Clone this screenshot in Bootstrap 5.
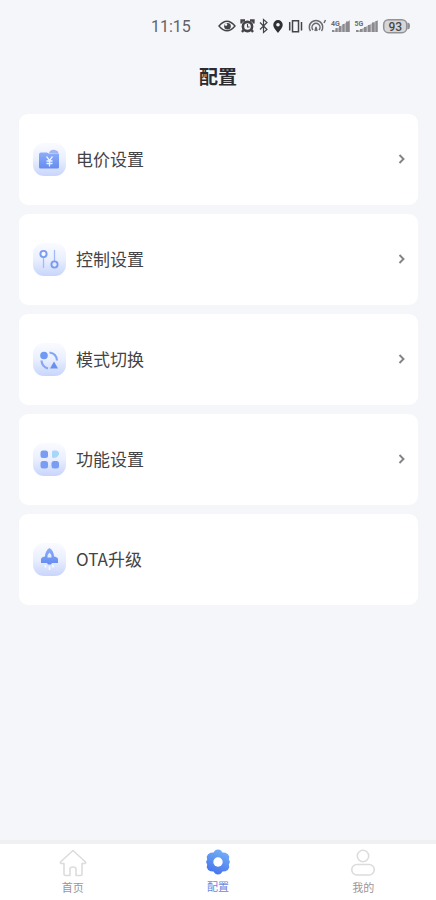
<!DOCTYPE html>
<html lang="zh-CN">
<head>
<meta charset="utf-8">
<meta name="viewport" content="width=device-width, initial-scale=1">
<title>配置</title>
<link href="https://cdn.jsdelivr.net/npm/bootstrap@5.3.0/dist/css/bootstrap.min.css" rel="stylesheet">
<style>
body{background:#f5f6fa;font-family:"Noto Sans","Noto Sans CJK SC",sans-serif;color:#3c3c3e;height:900px;overflow:hidden}
svg{display:block;flex:none}
.status{height:52px;padding-left:151px}
.clock{width:67px;font:16px/20px Roboto,sans-serif;color:#626266;padding-top:1px}
.title{height:47px;font:700 19px/47px "Noto Sans CJK SC",sans-serif;color:#2c2c30}
.menu{gap:9px;padding:15px 18px 0 19px}
.item{height:91px;border-radius:9px;padding:0 10px 1px 14px;font:17px/24px "Noto Sans CJK SC",sans-serif;color:#444446;text-decoration:none}
.tile{width:33px;height:33px;border-radius:11px;background:linear-gradient(#f9faff 5%,#e9effe 50%,#c8d5fc);margin-right:10px}
.tabs{height:60px;border-top:4px solid #eef0f1}
.tab{width:145.3px;padding-top:5px;font:11px/16px "Noto Sans CJK SC",sans-serif;color:#97979a;text-decoration:none}
.tab span{padding-top:2px}
.tab.current{color:#6c86e0;padding-top:4px}
</style>
</head>
<body class="d-flex flex-column">
<header>
<div class="status d-flex align-items-center">
<span class="clock">11:15</span>
<svg width="192" height="20" viewBox="218 16 192 20" fill="none" stroke="#444448" stroke-width="1.4">
<path d="M219 26q8-9.500 16 0q-8 9.500-16 0z"/><circle cx="227.500" cy="26.300" r="3.300" fill="#444448" stroke="none"/><circle cx="226" cy="24.500" r="1.300" fill="#f5f6fb" stroke="none"/>
<circle cx="247.500" cy="26.500" r="4.600" stroke-width="2.600"/><path d="M241.500 23.500v-3h3.500M250 20.500h3.500v3M243.500 30l-1.500 2M251.500 30l1.500 2" stroke-width="2.300"/><path d="M247.500 24v3h2" stroke-width="1.100"/>
<path d="M260 22.500l7 7-3.500 3v-13l3.500 3-7 7" stroke-width="1.200"/>
<path d="M278 33c-2-3-4.700-5-4.700-8.300a4.700 4.700 0 0 1 9.400 0c0 3.300-2.700 5.300-4.700 8.300z" fill="#303034" stroke="none"/><circle cx="278" cy="24.800" r="1.800" fill="#f5f6fb" stroke="none"/>
<path d="M292.500 20.700h6v11h-6zM289.700 22v8.500M301.500 22v8.500" stroke-width="1.500"/>
<g stroke="#6a6a6e" stroke-width="1.500"><path d="M310.500 31a6.700 6.700 0 1 1 11 0M313 30a4 4 0 1 1 6 0M315 31l1-4 1 4M324 23l1.500-3"/></g>
<g fill="#8b8b8f" stroke="none"><path d="M332 32v-2h2v2zM335.500 32v-4h2v4zM339 32v-6h2v6zM342.500 32v-8h2v8zM346 32v-10.500h3.500V32z"/><path d="M332 32l18-12v12z" opacity=".6"/><path d="M356 32v-2h2.500v2zM360 32v-3h2.500v3zM364 32v-5h2.500v5zM368 32v-7h2.500v7zM372 32v-9.500h2.500V32zM375.500 32V21h2v11z"/><path d="M356 32l22-12v12z" opacity=".55"/></g>
<g fill="#6c6c70" stroke="none" font-family="Roboto,sans-serif" font-weight="700" font-size="7"><text x="331" y="25.500">4G</text><text x="354.500" y="25.500">5G</text></g>
<rect x="383.700" y="19.700" width="23" height="13" rx="4.800" fill="#d7d7da" stroke="#929296" stroke-width="1.500"/><path d="M408 23.500c1.700 0 1.700 5 0 5z" fill="#929296" stroke="#929296"/>
<text x="395.200" y="30.500" text-anchor="middle" fill="#47474b" stroke="none" font-family="Roboto,sans-serif" font-weight="500" font-size="12">93</text>
</svg>
</div>
<h1 class="title text-center m-0">配置</h1>
</header>

<svg width="0" height="0" class="position-absolute"><defs><linearGradient id="blue" x1="0" y1="0" x2="0" y2="1"><stop stop-color="#8caefa"/><stop offset="1" stop-color="#648bf0"/></linearGradient><linearGradient id="gear" x1="0.700" y1="0" x2="0.300" y2="1"><stop stop-color="#75b0f5"/><stop offset="1" stop-color="#4472ee"/></linearGradient></defs></svg>

<main class="menu d-flex flex-column flex-grow-1">
<a class="item bg-white d-flex align-items-center" href="#">
<span class="tile"><svg width="33" height="33"><path d="M16 10l1-2q4-2.500 8 .5l.5 2z" fill="#a3b5ef"/><path d="M6 11.500q0-2 2-2h6l1.500 1H25q1 0 1 1V24q0 1.500-1.500 1.500h-17Q6 25.500 6 24z" fill="url(#blue)"/><path d="M13.500 13.500l3 4 3-4M16.500 17.500v6M13.500 18h6M13.500 20.500h6" fill="none" stroke="#e9f3ff" stroke-width="1.300"/></svg></span>
<span class="flex-grow-1">电价设置</span>
<svg width="12" height="12" fill="none" stroke="#838387" stroke-width="1.900"><path d="M3.500 2l4 4-4 4"/></svg></a>
<a class="item bg-white d-flex align-items-center" href="#">
<span class="tile"><svg width="33" height="33" fill="none"><path d="M10.500 13v12M21.500 7v12" stroke="#a2bafa" stroke-width="1.300"/><circle cx="10.500" cy="11" r="3.100" fill="#f5f8ff" stroke="#799bf1" stroke-width="1.900"/><circle cx="21.500" cy="21.500" r="3.100" fill="#e3ebff" stroke="#799bf1" stroke-width="1.900"/></svg></span>
<span class="flex-grow-1">控制设置</span>
<svg width="12" height="12" fill="none" stroke="#838387" stroke-width="1.900"><path d="M3.500 2l4 4-4 4"/></svg></a>
<a class="item bg-white d-flex align-items-center" href="#">
<span class="tile"><svg width="33" height="33"><circle cx="11" cy="12.500" r="3.800" fill="#709af2"/><path d="M21 18.500l4 7h-8z" fill="#6890ef"/><path d="M16.500 9.500q7 1 7.500 8M8.500 17.500q.5 6.500 6.500 8" fill="none" stroke="#84a7f5" stroke-width="2.200"/></svg></span>
<span class="flex-grow-1">模式切换</span>
<svg width="12" height="12" fill="none" stroke="#838387" stroke-width="1.900"><path d="M3.500 2l4 4-4 4"/></svg></a>
<a class="item bg-white d-flex align-items-center" href="#">
<span class="tile"><svg width="33" height="33" fill="#7a9df4"><rect x="7.500" y="7.500" width="7.500" height="7.500" rx="2.500"/><path d="M19 9q0-1.500 1.500-1.500h3q3 1 2.500 4-2 3.500-5.500 3.500-1.500 0-1.500-1.500z" fill="#a8d5fa"/><rect x="7.500" y="18" width="7.500" height="7.500" rx="2.500"/><rect x="18.500" y="18" width="7.500" height="7.500" rx="2.500"/></svg></span>
<span class="flex-grow-1">功能设置</span>
<svg width="12" height="12" fill="none" stroke="#838387" stroke-width="1.900"><path d="M3.500 2l4 4-4 4"/></svg></a>
<a class="item bg-white d-flex align-items-center" href="#">
<span class="tile"><svg width="33" height="33"><path d="M16.500 5q4 2 4.500 8.500 3.500.5 4 2.500v4h-6l-1 1.500h-3L14 20H8v-4q.5-2 4-2.500Q12.500 7 16.500 5z" fill="url(#blue)"/><path d="M16.500 9.500q2 1.500 2 5h-4q0-3.500 2-5z" fill="#e4edff"/><path d="M12.500 22v2.500M16.500 23.500v3.500M20 22v2.500" stroke="#f7faff" stroke-width="1.500"/></svg></span>
<span class="flex-grow-1">OTA升级</span></a>
</main>

<nav class="tabs d-flex bg-white">
<a class="tab d-flex flex-column align-items-center" href="#"><svg width="28" height="28" fill="none" stroke="#dcdcdf" stroke-width="1.600" stroke-linejoin="round"><path d="M14 1.500L1.500 13q-.5 1.500 1 1.500H5V25q0 1.500 1.500 1.500H11V20q0-2 3-2t3 2v6.500h4.500q1.500 0 1.500-1.500V14.500h2.500q1.500 0 1-1.500z"/></svg><span>首页</span></a>
<a class="tab current d-flex flex-column align-items-center" href="#"><svg width="28" height="28"><path d="M11 2.500q3-2 6 0l1.500 2 3 .2q3 .8 3.800 4L24.800 11.500l1.200 2.500-1.200 2.500.5 2.800q-.8 3.200-3.800 4l-3 .2-1.500 2q-3 2-6 0l-1.500-2-3-.2q-3-.8-3.800-4l.5-2.800L2 14l1.200-2.500-.5-2.800q.8-3.200 3.800-4l3-.2z" fill="url(#gear)"/><circle cx="14" cy="14" r="4.700" fill="#fff"/></svg><span>配置</span></a>
<a class="tab d-flex flex-column align-items-center" href="#"><svg width="28" height="28" fill="none" stroke="#dcdcdf" stroke-width="1.600"><circle cx="14" cy="7" r="5.700"/><rect x="2.800" y="15.500" width="22.400" height="10.500" rx="5"/></svg><span>我的</span></a>
</nav>
<script src="https://cdn.jsdelivr.net/npm/bootstrap@5.3.0/dist/js/bootstrap.bundle.min.js"></script>
</body>
</html>
